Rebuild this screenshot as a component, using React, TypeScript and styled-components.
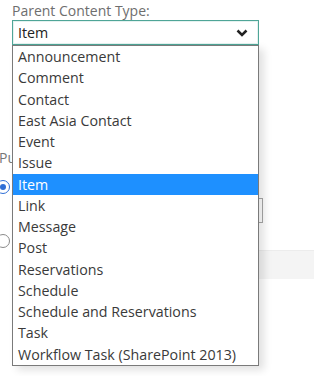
import React from "react";
import styled, { createGlobalStyle } from "styled-components";

const GlobalStyle = createGlobalStyle`
  html, body { margin: 0; padding: 0; background: #ffffff; }
  body { font-family: "Open Sans", "Noto Sans", sans-serif; }
`;

const Page = styled.div`
  position: relative;
  width: 314px;
  height: 376px;
  overflow: hidden;
  background: #ffffff;
`;

const Field = styled.div`
  display: flex;
  flex-direction: column;
  padding: 1px 56px 0 12px;
`;

const Label = styled.div`
  font-size: 14px;
  line-height: 19px;
  color: #6e6e6e;
`;

const Select = styled.div`
  box-sizing: border-box;
  height: 25px;
  width: 247px;
  border: 1px solid #4fa597;
  display: flex;
  align-items: center;
  justify-content: space-between;
  padding: 0 10px 0 5px;
  font-size: 14.25px;
  color: #222;
  box-shadow: inset 0 0 0 1px rgba(79, 165, 151, 0.15);
`;

const Behind = styled.div`
  display: flex;
  flex-direction: column;
  padding-top: 103px;
`;

const GhostLabel = styled.div`
  white-space: nowrap;
  font-size: 14px;
  line-height: 19px;
  color: #777;
  margin-left: -1px;
`;

const RadioRow = styled.div<{ $top: number }>`
  display: flex;
  align-items: center;
  margin-top: ${(p) => p.$top}px;
  margin-left: -4px;
`;

const Radio = styled.span<{ $on?: boolean }>`
  box-sizing: border-box;
  width: 14px;
  height: 14px;
  border-radius: 50%;
  border: 1.5px solid ${(p) => (p.$on ? "#2f6fd6" : "#8a8a8a")};
  display: flex;
  align-items: center;
  justify-content: center;
  &::after {
    content: "";
    width: 6px;
    height: 6px;
    border-radius: 50%;
    background: ${(p) => (p.$on ? "#2f6fd6" : "transparent")};
  }
`;

const TextBox = styled.div`
  box-sizing: border-box;
  margin: 4px 0 0 20px;
  width: 243px;
  height: 25px;
  border: 1px solid #a8a8a8;
  background: #fff;
`;

const Band = styled.div`
  margin: 2px 0 0 20px;
  height: 28px;
  background: #f4f4f4;
  border-top: 1px solid #ececec;
`;

const List = styled.ul`
  position: absolute;
  left: 12px;
  top: 45px;
  width: 247px;
  box-sizing: border-box;
  margin: 0;
  padding: 0;
  list-style: none;
  background: #fff;
  border: 1px solid #7a7a7a;
  box-shadow: 5px 4px 8px rgba(0, 0, 0, 0.12);
`;

const Option = styled.li<{ $selected?: boolean }>`
  height: 21.27px;
  line-height: 21.27px;
  padding-left: 5px;
  font-size: 14.25px;
  white-space: nowrap;
  color: ${(p) => (p.$selected ? "#ffffff" : "#3a3a3a")};
  background: ${(p) => (p.$selected ? "#1e90ff" : "transparent")};
`;

const options = [
  "Announcement",
  "Comment",
  "Contact",
  "East Asia Contact",
  "Event",
  "Issue",
  "Item",
  "Link",
  "Message",
  "Post",
  "Reservations",
  "Schedule",
  "Schedule and Reservations",
  "Task",
  "Workflow Task (SharePoint 2013)",
];

const Chevron = () => (
  <svg width="12" height="8" viewBox="0 0 12 8">
    <path d="M1.5 1.5 L6 6 L10.5 1.5" fill="none" stroke="#222" strokeWidth="2.5" />
  </svg>
);

export default function App() {
  return (
    <Page>
      <GlobalStyle />
      <Field>
        <Label>Parent Content Type:</Label>
        <Select>
          <span>Item</span>
          <Chevron />
        </Select>
      </Field>
      <Behind>
        <GhostLabel>Pu</GhostLabel>
        <RadioRow $top={13}>
          <Radio $on />
        </RadioRow>
        <TextBox />
        <RadioRow $top={11}>
          <Radio />
        </RadioRow>
        <Band />
      </Behind>
      <List>
        {options.map((o) => (
          <Option key={o} $selected={o === "Item"}>
            {o}
          </Option>
        ))}
      </List>
    </Page>
  );
}
